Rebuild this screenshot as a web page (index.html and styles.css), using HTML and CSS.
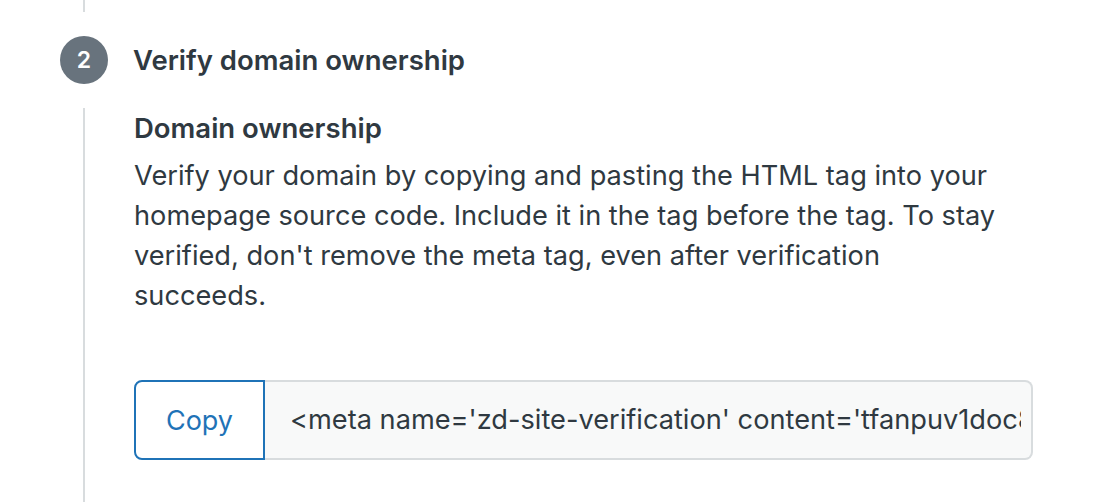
FILE: index.html
```html
<!DOCTYPE html>
<html>
<head>
<meta charset="utf-8">
<link rel="stylesheet" href="styles.css">
</head>
<body>
<div class="stepper">
  <div class="rail-top"><span class="line"></span></div>
  <div class="step-head">
    <div class="badge-col"><span class="badge">2</span></div>
    <h2 class="step-title">Verify domain ownership</h2>
  </div>
  <div class="step-body">
    <div class="rail"><span class="line"></span></div>
    <div class="content">
      <h3 class="sub-title">Domain ownership</h3>
      <p class="desc">Verify your domain by copying and pasting the HTML tag into your homepage source code. Include it in the tag before the tag. To stay verified, don't remove the meta tag, even after verification succeeds.</p>
      <div class="input-group">
        <button class="copy-btn">Copy</button>
        <div class="code-field"><span class="code-text">&lt;meta name='zd-site-verification' content='tfanpuv1doc8y3kq2m5hz7rw'/&gt;</span></div>
      </div>
    </div>
  </div>
</div>
</body>
</html>
```
FILE: styles.css
```css
html, body {
  margin: 0;
  padding: 0;
  background: #ffffff;
}
body {
  font-family: Inter, "Liberation Sans", sans-serif;
  color: #2f3941;
  overflow: hidden;
  height: 502px;
}
.stepper {
  display: flex;
  flex-direction: column;
  padding-left: 60px;
}
.rail-top {
  width: 48px;
  height: 12px;
  display: flex;
  justify-content: center;
}
.line {
  display: block;
  width: 2px;
  background: #d8dcde;
  height: 100%;
}
.step-head {
  display: flex;
  align-items: center;
  height: 48px;
  margin-top: 24px;
}
.badge-col {
  width: 48px;
  display: flex;
  justify-content: center;
}
.badge {
  width: 48px;
  height: 48px;
  border-radius: 50%;
  background: #68737d;
  color: #fff;
  font-size: 23px;
  font-weight: 600;
  display: flex;
  align-items: center;
  justify-content: center;
}
.step-title {
  margin: 0 0 0 25px;
  font-size: 27.5px;
  font-weight: 600;
  line-height: 40px;
}
.step-body {
  display: flex;
  margin-top: 24px;
  height: 400px;
}
.rail {
  width: 48px;
  display: flex;
  justify-content: center;
}
.rail .line {
  height: 100%;
}
.content {
  margin-left: 26px;
}
.sub-title {
  margin: 0;
  font-size: 27.5px;
  font-weight: 600;
  line-height: 40px;
}
.desc {
  margin: 8px 0 0;
  font-size: 27.2px;
  line-height: 40px;
  width: 872px;
}
.input-group {
  display: flex;
  margin-top: 64px;
  width: 899px;
  height: 80px;
}
.copy-btn {
  width: 131px;
  height: 80px;
  border: 2px solid #1f73b7;
  border-radius: 8px 0 0 8px;
  background: #fff;
  color: #1f73b7;
  font-family: inherit;
  font-size: 27px;
  padding: 0;
}
.code-field {
  flex: 1;
  min-width: 0;
  height: 80px;
  box-sizing: border-box;
  border: 2px solid #d8dcde;
  border-left: none;
  border-radius: 0 8px 8px 0;
  background: #f8f9f9;
  padding: 0 10px 0 25px;
  display: flex;
  align-items: center;
}
.code-text {
  font-size: 27.2px;
  line-height: 40px;
  white-space: nowrap;
  overflow: hidden;
  min-width: 0;
}
```
